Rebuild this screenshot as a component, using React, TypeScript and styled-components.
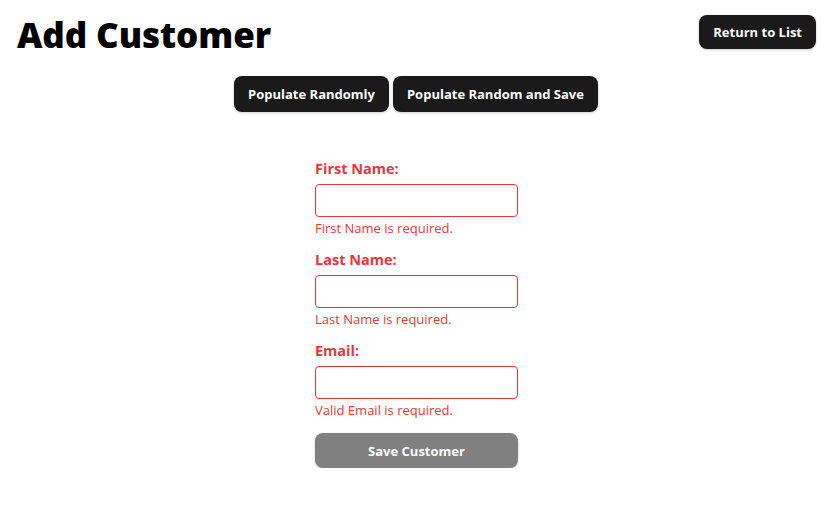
import React from 'react';
import styled, { createGlobalStyle } from 'styled-components';

const Global = createGlobalStyle`
  body {
    margin: 0;
    background: #fff;
    font-family: 'Open Sans', 'Noto Sans', sans-serif;
  }
`;

const Page = styled.div`
  padding: 14px 14px 0 17px;
`;

const Header = styled.div`
  display: flex;
  justify-content: space-between;
  align-items: flex-start;
`;

const Title = styled.h1`
  margin: 0;
  font-size: 35px;
  font-weight: 800;
  line-height: 42px;
  color: #000;
  letter-spacing: -0.1px;
`;

const Button = styled.button<{ $muted?: boolean; $h?: number }>`
  border: none;
  border-radius: 8px;
  background: ${({ $muted }) => ($muted ? '#808080' : '#1a1a1a')};
  color: #fff;
  font-family: inherit;
  font-size: 13px;
  font-weight: 700;
  padding: 0 14px;
  height: ${({ $h }) => $h ?? 35}px;
  cursor: pointer;
  box-shadow: 0 1px 3px rgba(0, 0, 0, 0.2);
`;

const ReturnButton = styled(Button)`
  margin-top: 1px;
`;

const SaveButton = styled(Button)`
  margin-top: 1px;
`;

const ActionRow = styled.div`
  display: flex;
  justify-content: center;
  gap: 4px;
  margin-top: 20px;
  padding-right: 1px;
`;

const Form = styled.form`
  width: 203px;
  margin: 47px auto 0;
  display: flex;
  flex-direction: column;
`;

const Field = styled.div`
  display: flex;
  flex-direction: column;
  margin-bottom: 13px;
`;

const Label = styled.label`
  color: #e0393e;
  font-weight: 700;
  font-size: 14.5px;
  line-height: 20px;
  margin-bottom: 5px;
`;

const Input = styled.input`
  box-sizing: border-box;
  height: 33px;
  border: 1px solid #e0393e;
  border-radius: 4px;
  outline: none;
`;

const Error = styled.span`
  color: #e0393e;
  font-size: 13px;
  line-height: 18px;
  margin-top: 2px;
`;

const fields = [
  { label: 'First Name:', error: 'First Name is required.' },
  { label: 'Last Name:', error: 'Last Name is required.' },
  { label: 'Email:', error: 'Valid Email is required.' },
];

export default function App() {
  return (
    <Page>
      <Global />
      <Header>
        <Title>Add Customer</Title>
        <ReturnButton $h={34}>Return to List</ReturnButton>
      </Header>
      <ActionRow>
        <Button $h={36}>Populate Randomly</Button>
        <Button $h={36}>Populate Random and Save</Button>
      </ActionRow>
      <Form onSubmit={(e) => e.preventDefault()}>
        {fields.map((f) => (
          <Field key={f.label}>
            <Label>{f.label}</Label>
            <Input type="text" />
            <Error>{f.error}</Error>
          </Field>
        ))}
        <SaveButton $muted type="submit">Save Customer</SaveButton>
      </Form>
    </Page>
  );
}
